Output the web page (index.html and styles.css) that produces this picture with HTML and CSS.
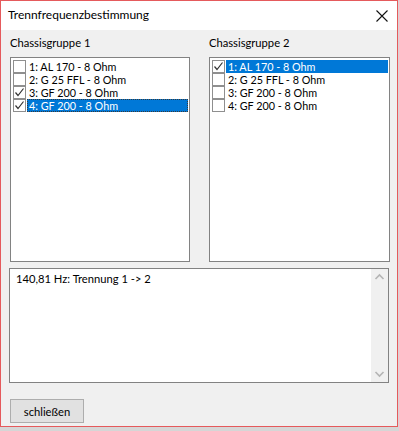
FILE: index.html
```html
<!DOCTYPE html>
<html lang="de">
<head>
<meta charset="utf-8">
<title>Trennfrequenzbestimmung</title>
<link rel="stylesheet" href="styles.css">
</head>
<body>
<div class="window">
  <div class="titlebar">
    <span class="title">Trennfrequenzbestimmung</span>
    <svg class="close" width="12" height="12" viewBox="0 0 12 12"><path d="M0.5 0.5 L11.5 11.5 M11.5 0.5 L0.5 11.5" stroke="#111" stroke-width="1.1" fill="none"/></svg>
  </div>
  <div class="content">
    <div class="groups">
      <div class="group">
        <div class="label">Chassisgruppe 1</div>
        <div class="list">
          <div class="item"><span class="cb"></span><span class="txt">1: AL 170 - 8 Ohm</span></div>
          <div class="item"><span class="cb"></span><span class="txt">2: G 25 FFL - 8 Ohm</span></div>
          <div class="item"><span class="cb checked"><svg width="11" height="11" viewBox="0 0 11 11"><path d="M1.5 5.5 L4 8.5 L9.5 1.5" stroke="#333" stroke-width="1.2" fill="none"/></svg></span><span class="txt">3: GF 200 - 8 Ohm</span></div>
          <div class="item"><span class="cb checked"><svg width="11" height="11" viewBox="0 0 11 11"><path d="M1.5 5.5 L4 8.5 L9.5 1.5" stroke="#333" stroke-width="1.2" fill="none"/></svg></span><span class="txt sel focus">4: GF 200 - 8 Ohm</span></div>
        </div>
      </div>
      <div class="group">
        <div class="label">Chassisgruppe 2</div>
        <div class="list">
          <div class="item"><span class="cb checked"><svg width="11" height="11" viewBox="0 0 11 11"><path d="M1.5 5.5 L4 8.5 L9.5 1.5" stroke="#333" stroke-width="1.2" fill="none"/></svg></span><span class="txt sel">1: AL 170 - 8 Ohm</span></div>
          <div class="item"><span class="cb"></span><span class="txt">2: G 25 FFL - 8 Ohm</span></div>
          <div class="item"><span class="cb"></span><span class="txt">3: GF 200 - 8 Ohm</span></div>
          <div class="item"><span class="cb"></span><span class="txt">4: GF 200 - 8 Ohm</span></div>
        </div>
      </div>
    </div>
    <div class="output">
      <div class="output-text">140,81 Hz: Trennung 1 -&gt; 2</div>
      <div class="scrollbar">
        <svg width="17" height="17" viewBox="0 0 17 17"><path d="M4.5 10 L8.5 6 L12.5 10" stroke="#b4b4b4" stroke-width="1.6" fill="none"/></svg>
        <svg width="17" height="17" viewBox="0 0 17 17"><path d="M4.5 7 L8.5 11 L12.5 7" stroke="#b4b4b4" stroke-width="1.6" fill="none"/></svg>
      </div>
    </div>
    <button class="btn">schließen</button>
  </div>
</div>
</body>
</html>
```
FILE: styles.css
```css
html, body {
  margin: 0;
  padding: 0;
}
body {
  width: 399px;
  height: 431px;
  background: #d6d6d6;
  font-family: Lato, "Noto Sans", sans-serif;
  font-size: 11.2px;
  color: #000;
  overflow: hidden;
}
.window {
  width: 396px;
  height: 425px;
  border: 1px solid #e55a5c;
  background: #f0f0f0;
  display: flex;
  flex-direction: column;
}
.titlebar {
  height: 29px;
  background: #fff;
  display: flex;
  align-items: center;
  justify-content: space-between;
  padding: 0 9px 0 7px;
  flex-shrink: 0;
}
.title {
  font-size: 12px;
  line-height: 14px;
  padding-bottom: 1px;
}
.close {
  display: block;
}
.content {
  padding: 6px 0 0 9px;
  display: flex;
  flex-direction: column;
  flex: 1;
}
.groups {
  display: flex;
  gap: 19px;
}
.group {
  display: flex;
  flex-direction: column;
}
.group:first-child { width: 180px; }
.group:last-child { width: 181px; }
.label {
  line-height: 14px;
  height: 14px;
  margin: 0 0 7px 0;
}
.list {
  height: 201px;
  border: 1px solid #828282;
  background: #fff;
  padding: 2px 0 0 2px;
  box-sizing: content-box;
  display: flex;
  flex-direction: column;
}
.group:first-child .list { width: 176px; }
.group:last-child .list { width: 177px; }
.item {
  display: flex;
  align-items: center;
  height: 13px;
  font-size: 10.8px;
}
.cb {
  width: 11px;
  height: 11px;
  border: 1px solid #8f8f8f;
  background: #fff;
  flex-shrink: 0;
  display: flex;
  align-items: center;
  justify-content: center;
}
.cb svg { display: block; }
.txt {
  margin-left: 1px;
  padding-left: 2px;
  line-height: 13px;
  height: 13px;
  flex: 1;
  margin-right: 1px;
  white-space: nowrap;
  box-sizing: border-box;
}
.sel {
  background: #0078d7;
  color: #fff;
}
.focus {
  border: 1px dotted #3a3a3a;
  line-height: 11px;
  padding-left: 1px;
}
.output {
  margin-top: 6px;
  width: 378px;
  height: 113px;
  border: 1px solid #828282;
  margin-left: -1px;
  background: #fff;
  display: flex;
}
.output-text {
  flex: 1;
  padding: 3px 0 0 6px;
  line-height: 14px;
}
.scrollbar {
  width: 17px;
  background: #f0f0f0;
  display: flex;
  flex-direction: column;
  justify-content: space-between;
}
.scrollbar svg { display: block; }
.btn {
  margin-top: 16px;
  width: 74px;
  height: 24px;
  padding: 0;
  background: #e1e1e1;
  border: 1px solid #adadad;
  font-family: inherit;
  font-size: 11.2px;
  color: #000;
}
```
